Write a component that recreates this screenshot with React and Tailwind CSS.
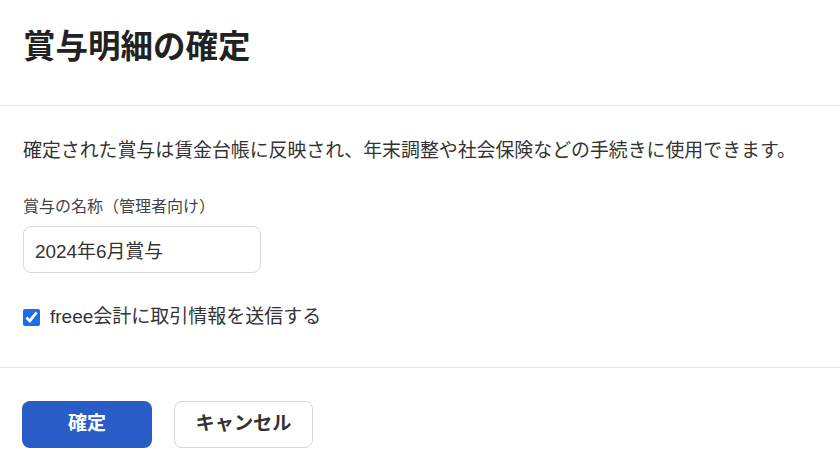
import React from "react";

export default function App() {
  return (
    <div
      className="w-[840px] h-[469px] bg-white text-[#333333] overflow-hidden"
      style={{ fontFamily: '"Liberation Sans", "Noto Sans CJK JP", sans-serif' }}
    >
      <div className="px-[23px] pt-[23px] h-[106px] border-b border-[#e6e6e6]">
        <h1 className="text-[32.5px] leading-[48px] font-bold text-[#222222]">賞与明細の確定</h1>
      </div>
      <div className="px-[23px] pt-[31px] pb-[36px] border-b border-[#e6e6e6]">
        <p className="text-[18.9px] leading-[28px] whitespace-nowrap">
          確定された賞与は賃金台帳に反映され、年末調整や社会保険などの手続きに使用できます。
        </p>
        <label className="block mt-[31px] text-[16px] leading-[22px] text-[#444444]">賞与の名称（管理者向け）</label>
        <input
          className="mt-[8px] block w-[238px] h-[47px] rounded-[8px] border border-[#d9d9d9] px-[11px] text-[18.9px] text-[#333333] outline-none"
          defaultValue="2024年6月賞与"
          style={{ fontFamily: '"Liberation Sans", "Noto Sans CJK JP", sans-serif' }}
        />
        <label className="mt-[30px] flex items-center gap-[10px] h-[28px]">
          <input type="checkbox" defaultChecked className="w-[17px] h-[17px] m-0 accent-[#1a6fe8]" />
          <span className="text-[19px] leading-[28px]">freee会計に取引情報を送信する</span>
        </label>
      </div>
      <div className="px-[22px] pt-[33px] flex gap-[22px]">
        <button className="w-[130px] h-[47px] rounded-[8px] bg-[#2a5cc7] text-white text-[19px] font-bold">確定</button>
        <button className="w-[139px] h-[47px] rounded-[8px] border border-[#d6d6d6] bg-white text-[#333333] text-[19.2px] font-bold">キャンセル</button>
      </div>
    </div>
  );
}
